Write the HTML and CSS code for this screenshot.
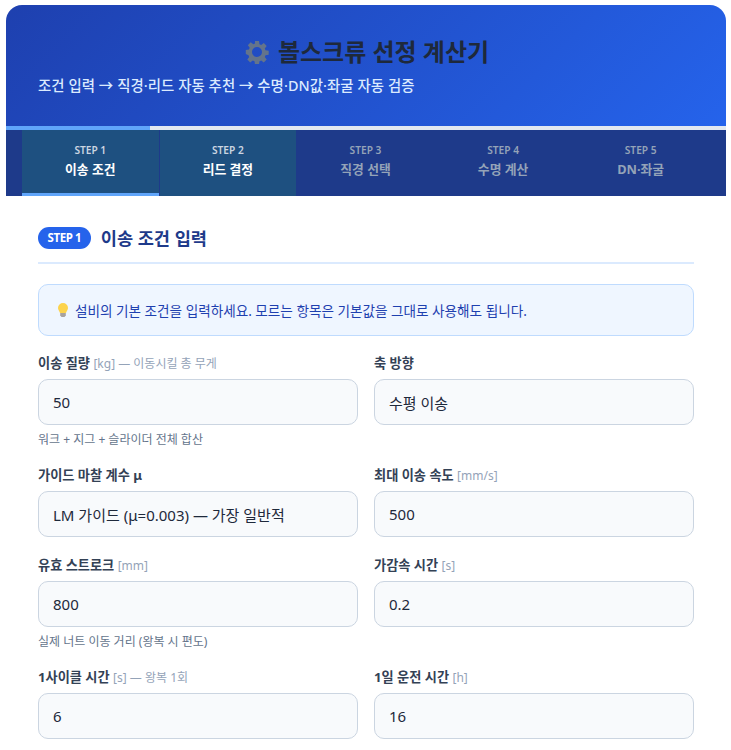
FILE: index.html
```html
<!DOCTYPE html>
<html lang="ko">
<head>
<meta charset="utf-8">
<title>볼스크류 선정 계산기</title>
<link rel="stylesheet" href="styles.css">
</head>
<body>
<div class="app">
  <header class="hero">
    <h1 class="title"><svg class="gear" viewBox="0 0 24 24" width="24" height="24"><path fill="#64748b" fill-rule="evenodd" d="M10 1h4l.5 3.200 1.700.7 2.600-1.900 2.900 2.900-1.900 2.600.7 1.700 3.200.5v4l-3.200.5-.7 1.700 1.900 2.600-2.900 2.900-2.600-1.900-1.700.7-.5 3.200h-4l-.5-3.200-1.700-.7-2.600 1.900-2.900-2.900 1.900-2.600-.7-1.700L.800 14v-4l3.200-.5.7-1.700L2.800 5.200 5.700 2.300l2.600 1.900 1.700-.7zM12 7a5 5 0 1 0 0 10 5 5 0 0 0 0-10z"/></svg>볼스크류 선정 계산기</h1>
    <p class="subtitle">조건 입력 → 직경·리드 자동 추천 → 수명·DN값·좌굴 자동 검증</p>
  </header>
  <div class="progress"><div class="progress-fill"></div></div>
  <nav class="tabs">
    <div class="tab active"><span class="tab-step">STEP 1</span><span class="tab-name">이송 조건</span></div>
    <div class="tab done"><span class="tab-step">STEP 2</span><span class="tab-name">리드 결정</span></div>
    <div class="tab"><span class="tab-step">STEP 3</span><span class="tab-name">직경 선택</span></div>
    <div class="tab"><span class="tab-step">STEP 4</span><span class="tab-name">수명 계산</span></div>
    <div class="tab"><span class="tab-step">STEP 5</span><span class="tab-name">DN·좌굴</span></div>
  </nav>
  <main class="content">
    <div class="section-head"><span class="badge">STEP 1</span><h2 class="section-title">이송 조건 입력</h2></div>
    <div class="notice"><svg class="bulb" viewBox="0 0 10 14" width="10" height="14"><path fill="#fcd34d" d="M5 0a5 5 0 0 1 5 5c0 2-1.500 3-2 5H2C1.500 8 0 7 0 5a5 5 0 0 1 5-5z"/><path fill="#a8a29e" d="M2.200 10h5.600v2.500L6.500 14h-3l-1.300-1.500z"/></svg><span>설비의 기본 조건을 입력하세요. 모르는 항목은 기본값을 그대로 사용해도 됩니다.</span></div>
    <div class="form-grid">
      <div class="field"><label class="label">이송 질량 <span class="unit">[kg] — 이동시킬 총 무게</span></label><div class="input">50</div><div class="hint">워크 + 지그 + 슬라이더 전체 합산</div></div>
      <div class="field"><label class="label">축 방향</label><div class="input">수평 이송</div></div>
      <div class="field"><label class="label">가이드 마찰 계수 μ</label><div class="input">LM 가이드 (μ=0.003) — 가장 일반적</div></div>
      <div class="field"><label class="label">최대 이송 속도 <span class="unit">[mm/s]</span></label><div class="input">500</div></div>
      <div class="field"><label class="label">유효 스트로크 <span class="unit">[mm]</span></label><div class="input">800</div><div class="hint">실제 너트 이동 거리 (왕복 시 편도)</div></div>
      <div class="field"><label class="label">가감속 시간 <span class="unit">[s]</span></label><div class="input">0.2</div></div>
      <div class="field"><label class="label">1사이클 시간 <span class="unit">[s] — 왕복 1회</span></label><div class="input">6</div></div>
      <div class="field"><label class="label">1일 운전 시간 <span class="unit">[h]</span></label><div class="input">16</div></div>
    </div>
  </main>
</div>
</body>
</html>
```

FILE: styles.css
```css
* { box-sizing: border-box; }
html, body { margin: 0; height: 750px; overflow: hidden; background: #fff; }
body {
  padding: 5px 5px 0 6px;
  font-family: "Noto Sans", "Noto Sans CJK KR", "Liberation Sans", sans-serif;
  color: #1e293b;
}
.app { width: 720px; background: #fff; }
.hero {
  height: 121px;
  padding: 32px 32px 0;
  border-radius: 16px 16px 0 0;
  background: linear-gradient(135deg, #1e40af, #2563eb);
  color: #fff;
}
.title {
  margin: 0;
  display: flex;
  justify-content: center;
  align-items: center;
  gap: 9px;
  padding-left: 2px;
  font-size: 24px;
  font-weight: 700;
  line-height: 30px;
  color: #1e293b;
}
.gear { flex: none; }
.subtitle { margin: 9px 0 0; font-size: 14.400px; line-height: 20px; letter-spacing: .07px; color: #dbeafe; font-weight: 500; }
.progress { height: 4px; background: #e2e8f0; }
.progress-fill { width: 20%; height: 100%; background: #60a5fa; }
.tabs { display: flex; height: 66px; padding: 0 16px; background: #1e3a8a; }
.tab {
  flex: 1;
  display: flex;
  flex-direction: column;
  align-items: center;
  padding-top: 13px;
  border-bottom: 3px solid transparent;
  margin-right: 1px;
  color: #94a3b8;
}
.tab-step { font-size: 10.200px; font-weight: 600; line-height: 14px; }
.tab-name { margin-top: 3px; font-size: 12.800px; font-weight: 700; line-height: 18px; }
.tab.active, .tab.done { background: #1e5080; color: #fff; }
.tab.active .tab-step, .tab.done .tab-step { color: #cbd5e1; }
.tab.active { border-bottom-color: #60a5fa; }
.content { padding: 30px 32px 0; }
.section-head {
  display: flex;
  align-items: center;
  gap: 10px;
  padding-bottom: 12px;
  border-bottom: 2px solid #dbeafe;
  margin-bottom: 20px;
}
.badge {
  padding: 0 9.500px;
  height: 22px;
  line-height: 22px;
  border-radius: 11px;
  background: #2563eb;
  color: #fff;
  font-size: 11.500px;
  font-weight: 700;
  letter-spacing: -.4px;
}
.section-title { margin: 0; font-size: 17.600px; font-weight: 700; line-height: 24px; color: #1e3a8a; }
.notice {
  height: 52px;
  padding: 0 19px;
  display: flex;
  align-items: center;
  gap: 7px;
  border: 1px solid #bfdbfe;
  border-radius: 10px;
  background: #eff6ff;
  color: #1e40af;
  font-size: 13.600px;
  margin-bottom: 19px;
}
.bulb { flex: none; margin-top: -1px; }
.form-grid { display: grid; grid-template-columns: 1fr 1fr; column-gap: 16px; align-items: start; }
.field { margin-bottom: 20px; }
.label { display: block; height: 18px; margin-bottom: 6px; font-size: 13.200px; font-weight: 700; line-height: 16px; color: #334155; }
.unit { font-weight: 400; font-size: 12px; color: #94a3b8; }
.input {
  height: 46px;
  padding: 0 14px;
  display: flex;
  align-items: center;
  border: 1.500px solid #cbd5e1;
  border-radius: 10px;
  background: #f8fafc;
  font-size: 15px;
  color: #1e293b;
}
.hint { height: 16px; margin-top: 6px; font-size: 12px; line-height: 18px; color: #64748b; }
```
